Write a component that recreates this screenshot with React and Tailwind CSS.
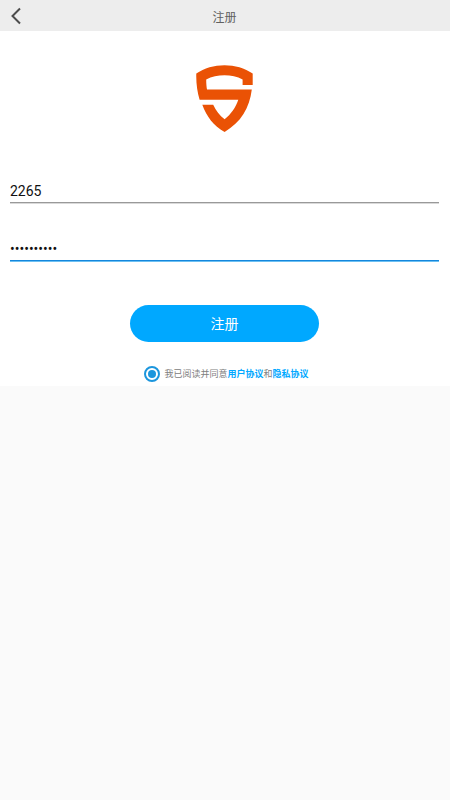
import { useState } from 'react';

// 盾牌标志
const ShieldLogo = () => (
  <svg viewBox="0 0 57 67" className="h-[67px] w-[57px]" fill="#ea5205" aria-hidden="true">
    <path d="M0.3 8.6C16 -2.6 41 -2.6 56.7 8.6V20H46.6V14.4C36 9 21 9 10.2 14.4C10.2 18.5 10.5 21.5 11 24.6H55.8C53.5 43 45 57.5 28.6 67C17.5 60.5 10.5 51.5 6.3 39.7H17.2C20 45.5 23.5 50.3 28.6 54.3C35 49.2 39.8 42.5 42.3 34.8H3.6C1.2 26.5 0 18 0.3 8.6Z" />
  </svg>
);

const Header = () => (
  <header className="grid h-[31px] grid-cols-[32px_1fr_33px] items-center bg-[#ededed]">
    <button type="button" aria-label="返回" className="flex h-full items-center justify-center">
      <svg viewBox="0 0 10 18" className="h-[18px] w-[10px]" fill="none" stroke="#4c4c4c" strokeWidth="2" aria-hidden="true">
        <path d="M9 1.5L1.5 9L9 16.5" />
      </svg>
    </button>
    <h1 className="pt-1 text-center text-xs text-[#606060]">注册</h1>
  </header>
);

const RegisterForm = () => {
  const [account, setAccount] = useState('2265');
  const [password, setPassword] = useState('abcdef1234');
  const [agreed, setAgreed] = useState(true);

  return (
    <form onSubmit={(e) => e.preventDefault()} className="flex flex-col pr-[11px] pb-1 pl-[10px]">
      <input
        type="text"
        aria-label="账号"
        value={account}
        onChange={(e) => setAccount(e.target.value)}
        className="h-[27px] w-full border-b border-[#999] pt-1 text-sm text-[#111] shadow-[0_1px_0_#d9d9d9] outline-none"
      />
      <input
        type="password"
        aria-label="密码"
        value={password}
        onChange={(e) => setPassword(e.target.value)}
        className="mt-[31px] h-[27px] w-full border-b border-[#1487dc] pt-1 text-sm text-[#111] shadow-[0_1px_0_#6dc0f2] outline-none"
      />
      <button
        type="submit"
        className="mt-11 h-[37px] w-[44%] self-center rounded-full bg-[#00a8ff] text-sm text-white"
      >
        注册
      </button>
      <div className="mt-6 flex items-center justify-center gap-1 pl-1 text-[9px] leading-4 text-[#808080]">
        <input
          id="agree"
          type="radio"
          checked={agreed}
          onChange={() => setAgreed(true)}
          className="size-4 appearance-none rounded-full border-2 border-[#1c96dd] bg-white bg-clip-content p-[2px] checked:bg-[#1c96dd]"
        />
        <p>
          <label htmlFor="agree">我已阅读并同意</label>
          <a href="#terms" className="font-bold text-[#00a8ff]">用户协议</a>
          和
          <a href="#privacy" className="font-bold text-[#00a8ff]">隐私协议</a>
        </p>
      </div>
    </form>
  );
};

const App = () => (
  <div className="min-h-screen bg-[#fafafa] font-[Roboto,'Noto_Sans_CJK_SC',sans-serif]">
    <Header />
    <main className="bg-white pt-[34px]">
      <div className="mb-11 flex justify-center pr-3 pl-[10px]">
        <ShieldLogo />
      </div>
      <RegisterForm />
    </main>
  </div>
);

export default App;
